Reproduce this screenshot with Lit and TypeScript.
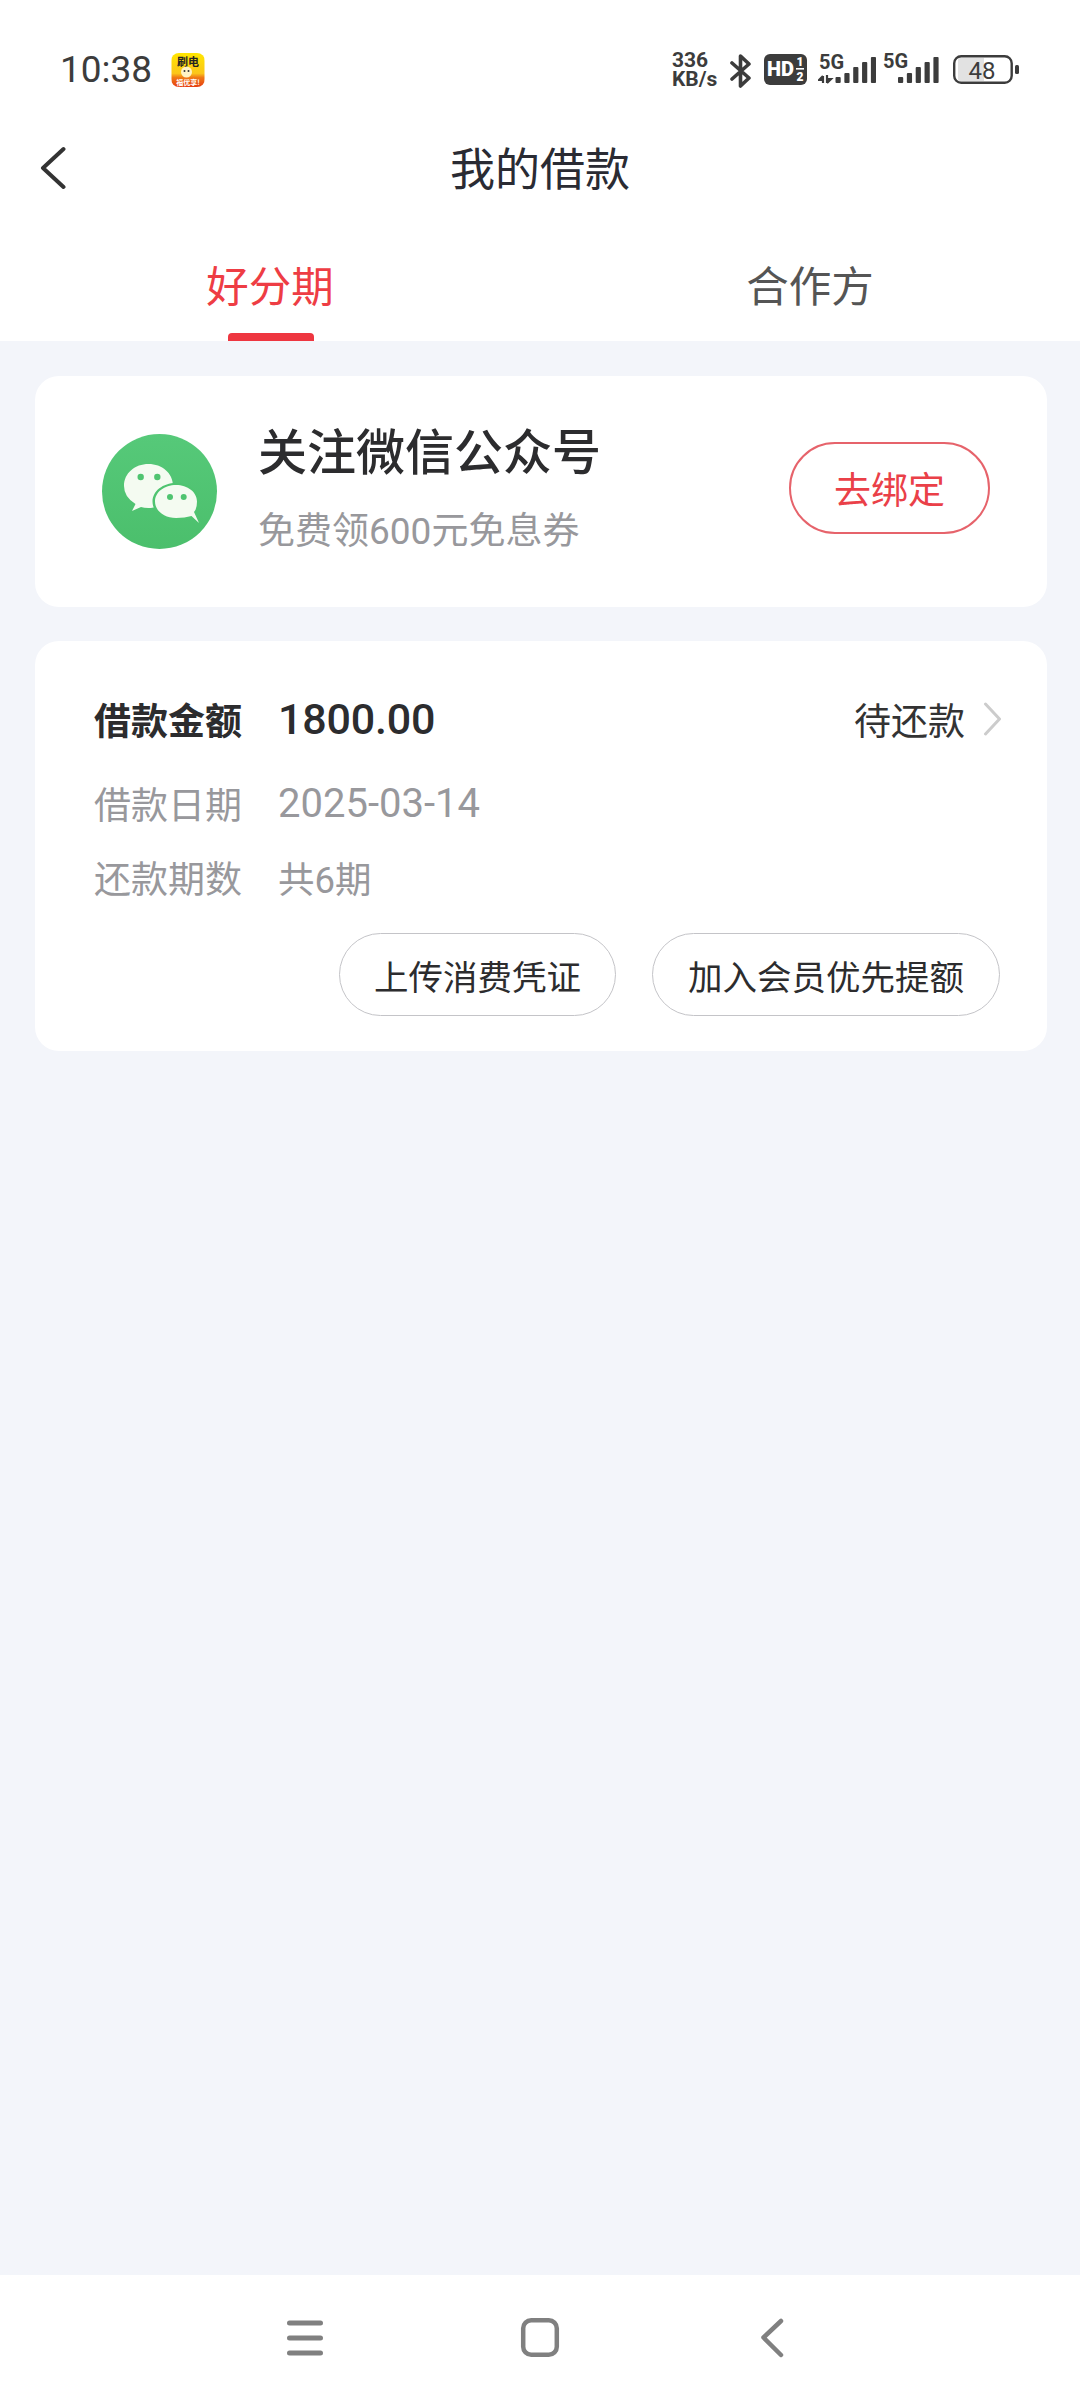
import { LitElement, html, css, svg } from "lit";
import { customElement } from "lit/decorators.js";

@customElement("app-root")
export class AppRoot extends LitElement {
  static styles = css`
    :host { display: flex; flex-direction: column; width: 1080px; height: 2400px; background: #fff; font-family: Roboto, "Noto Sans CJK SC", sans-serif; color: #2b2c30; }
    * { box-sizing: border-box; }
    svg { display: block; flex: none; }
    .status { height: 111px; padding: 53px 61px 0 60px; display: flex; justify-content: space-between; align-items: flex-start; }
    .left { display: flex; align-items: center; height: 34px; gap: 20px; }
    .time { font-size: 37px; line-height: 34px; color: #3c3c3c; width: 91px; white-space: nowrap; }
    .right { display: flex; align-items: flex-start; height: 34px; color: #3c3c3c; }
    .speed { width: 47px; margin: -2px 11px 0 0; font-size: 21px; line-height: 19px; font-weight: 700; white-space: nowrap; }
    .bt { margin-right: 12px; }
    .hd { margin-right: 11px; }
    .sig { margin-top: -6px; }
    .sig1 { margin-right: 7px; }
    .sig2 { margin-right: 14px; }
    .header { height: 110px; display: flex; align-items: center; justify-content: center; position: relative; font-size: 45px; color: #2a2b33; }
    .back { position: absolute; left: 40px; top: 35px; }
    .tabs { height: 120px; display: flex; }
    .tab { flex: 1; display: flex; flex-direction: column; align-items: center; font-size: 42.5px; line-height: 60px; padding-top: 37px; color: #555; position: relative; }
    .tab.on { color: #ee3d44; }
    .tab.on::after { content: ""; position: absolute; left: 228px; width: 86px; top: 112px; height: 8px; border-radius: 4px 4px 0 0; background: #ee3640; }
    main { flex: 1; background: #f3f5fa; padding: 35px 33px 0 35px; display: flex; flex-direction: column; gap: 34px; }
    .card { background: #fff; border-radius: 24px; }
    .wx { height: 231px; padding: 0 57px 0 67px; display: flex; align-items: center; }
    .wxtext { flex: 1; margin-left: 41px; padding-bottom: 8px; }
    .wxt { font-size: 49px; line-height: 70px; font-weight: 500; color: #2c2c2e; white-space: nowrap; }
    .wxs { margin-top: 18px; font-size: 37px; line-height: 50px; color: #98989c; white-space: nowrap; }
    .bind { width: 201px; height: 92px; margin-bottom: 7px; border: 2px solid #e6636b; border-radius: 46px; color: #ea4048; font-size: 37px; display: flex; align-items: center; justify-content: center; }
    .loan { height: 410px; padding: 38px 47px 0 59px; }
    .row { display: flex; align-items: center; white-space: nowrap; }
    .r1 { height: 80px; }
    .r2 { height: 60px; margin-top: 14px; }
    .r3 { height: 60px; margin-top: 14px; }
    .lab { width: 184px; font-size: 37px; color: #98989c; }
    .val { font-size: 40px; color: #98989c; flex: 1; }
    .r1 .lab { color: #2c2c2e; font-weight: 700; }
    .r1 .val { font-size: 43px; font-weight: 500; color: #2c2c2e; letter-spacing: -0.2px; }
    .r3 .val { font-size: 36.5px; }
    .stat { font-size: 37px; color: #333; margin-right: 18px; }
    .chev { margin-right: -2px; }
    .btns { margin-top: 26px; display: flex; justify-content: flex-end; gap: 36px; }
    .pill { height: 83px; border: 1.5px solid #c4c4c8; border-radius: 42px; display: flex; align-items: center; justify-content: center; font-size: 34.5px; color: #2c2c2e; white-space: nowrap; }
    .pa { width: 277px; }
    .pb { width: 348px; }
    .nav { height: 125px; display: flex; }
    .nav svg { margin-top: 42px; }
    .nav .n1 { margin-left: 285px; }
    .nav .n2 { margin-left: 194px; }
    .nav .n3 { margin-left: 199px; }
    .app { width: 34px; height: 34px; border-radius: 8px; overflow: hidden; }
  `;

  private bars(x: number) {
    const tops = [20, 16, 10, 5, 0];
    return tops.map((t, i) => svg`<rect x=${x + i * 8.85} y=${t + 4} width="5.2" height=${26 - t} rx="1" fill="#3c3c3c"></rect>`);
  }

  render() {
    return html`
      <div class="status">
        <div class="left">
          <span class="time">10:38</span>
          <svg class="app" width="34" height="34" viewBox="0 0 33 34">
            <defs>
              <linearGradient id="ag" x1="0" y1="0" x2="0" y2="1">
                <stop offset="0" stop-color="#ffe600"></stop>
                <stop offset=".6" stop-color="#fbc61a"></stop>
                <stop offset=".72" stop-color="#f07a16"></stop>
                <stop offset="1" stop-color="#e53d12"></stop>
              </linearGradient>
            </defs>
            <rect width="33" height="34" fill="url(#ag)"></rect>
            <text x="16.5" y="13" text-anchor="middle" font-size="11" font-weight="700" fill="#222" font-family="Noto Sans CJK SC">刷电</text>
            <circle cx="15" cy="19" r="5.5" fill="#fff3c4"></circle>
            <circle cx="13" cy="18" r="1" fill="#333"></circle>
            <circle cx="17" cy="18" r="1" fill="#333"></circle>
            <text x="16.5" y="32" text-anchor="middle" font-size="7" font-weight="700" fill="#fff" font-family="Noto Sans CJK SC">福优享!</text>
          </svg>
        </div>
        <div class="right">
          <div class="speed"><div>336</div><div>KB/s</div></div>
          <svg class="bt" width="22" height="36" viewBox="0 0 22 36" fill="none" stroke="#3c3c3c" stroke-width="3.6" stroke-linejoin="round" stroke-linecap="round">
            <path d="M2 10 L19 25 L10.5 33 V3 L19 11 L2 26"></path>
          </svg>
          <svg class="hd" width="43" height="32" viewBox="0 0 43 32">
            <rect width="43" height="31" y="1" rx="6" fill="#3c3c3c"></rect>
            <text x="3" y="23" font-size="20" font-weight="900" fill="#fff" font-family="Roboto">HD</text>
            <text x="36" y="13" text-anchor="middle" font-size="12" font-weight="900" fill="#fff" font-family="Roboto">1</text>
            <text x="36" y="28" text-anchor="middle" font-size="12" font-weight="900" fill="#fff" font-family="Roboto">2</text>
            <rect x="32" y="15" width="8" height="1.6" fill="#fff"></rect>
          </svg>
          <svg class="sig sig1" width="58" height="40" viewBox="0 -6 58 40">
            <text x="1" y="16" font-size="20" font-weight="700" fill="#3c3c3c" font-family="Roboto">5G</text>
            <path d="M5 23 L5 30 M5 23 L1 27 H5 M9 22 V30 M9 30 L13 26 H9" stroke="#3c3c3c" stroke-width="2.2" fill="none"></path>
            ${this.bars(17.5)}
          </svg>
          <svg class="sig sig2" width="56" height="40" viewBox="0 -6 56 40">
            <text x="0" y="15" font-size="20" font-weight="700" fill="#3c3c3c" font-family="Roboto">5G</text>
            ${this.bars(15)}
          </svg>
          <svg width="66" height="32" viewBox="0 0 66 32">
            <path d="M7 5 H31 V28 H7 Q5 28 5 26 V7 Q5 5 7 5Z" fill="#e2e2e2"></path>
            <rect x="1.2" y="3.2" width="57.5" height="26.6" rx="7" fill="none" stroke="#3c3c3c" stroke-width="2.4"></rect>
            <rect x="62" y="12" width="4" height="9" rx="1.5" fill="#3c3c3c"></rect>
            <text x="29" y="26" text-anchor="middle" font-size="24" fill="#3c3c3c" font-family="Roboto">48</text>
          </svg>
        </div>
      </div>

      <div class="header">
        <svg class="back" width="26" height="44" viewBox="0 0 26 44" fill="none" stroke="#333" stroke-width="4" stroke-linecap="round" stroke-linejoin="round">
          <path d="M23.5 3 L3 22 L23.5 41"></path>
        </svg>
        我的借款
      </div>

      <div class="tabs">
        <div class="tab on">好分期</div>
        <div class="tab">合作方</div>
      </div>

      <main>
        <section class="card wx">
          <svg width="115" height="115" viewBox="0 0 115 115">
            <defs>
              <linearGradient id="wg" x1="0" y1="0" x2="0" y2="1">
                <stop offset="0" stop-color="#56c979"></stop>
                <stop offset="1" stop-color="#4bbf6c"></stop>
              </linearGradient>
            </defs>
            <circle cx="57.5" cy="57.5" r="57.5" fill="url(#wg)"></circle>
            <path d="M30 77 L33.5 70 Q22 63 22 52 C22 39 33 30 46.5 30 C60 30 71 39 71 52 C71 65 60 74 46.5 74 Q42 74 39 73 Z" fill="#f4fbf1"></path>
            <path d="M100 91 L90 84 Q84 86 74 86 C61 86 50.5 78 50.5 67.5 C50.5 57 61 49 74 49 C87 49 97.5 57 97.5 67.5 Q97.5 75 94 79 Z" fill="#4fc470"></path>
            <path d="M97 89 L89.5 82 Q83 84 74 84 C62.5 84 53 77 53 67.5 C53 58 62.5 51 74 51 C85.5 51 95 58 95 67.5 Q95 75 92 78 Z" fill="#f4fbf1"></path>
            <circle cx="38.7" cy="43" r="3.2" fill="#4fc470"></circle>
            <circle cx="55.3" cy="43" r="3.2" fill="#4fc470"></circle>
            <circle cx="68" cy="63" r="3" fill="#4fc470"></circle>
            <circle cx="81.7" cy="63" r="3" fill="#4fc470"></circle>
          </svg>
          <div class="wxtext">
            <div class="wxt">关注微信公众号</div>
            <div class="wxs">免费领600元免息券</div>
          </div>
          <div class="bind">去绑定</div>
        </section>

        <section class="card loan">
          <div class="row r1">
            <span class="lab">借款金额</span>
            <span class="val">1800.00</span>
            <span class="stat">待还款</span>
            <svg class="chev" width="19" height="34" viewBox="0 0 19 34" fill="none" stroke="#cccccc" stroke-width="3" stroke-linecap="round" stroke-linejoin="round">
              <path d="M2.5 2 L16.5 17 L2.5 32"></path>
            </svg>
          </div>
          <div class="row r2">
            <span class="lab">借款日期</span>
            <span class="val">2025-03-14</span>
          </div>
          <div class="row r3">
            <span class="lab">还款期数</span>
            <span class="val">共6期</span>
          </div>
          <div class="btns">
            <div class="pill pa">上传消费凭证</div>
            <div class="pill pb">加入会员优先提额</div>
          </div>
        </section>
      </main>

      <nav class="nav">
        <svg class="n1" width="40" height="40" viewBox="0 0 40 40" fill="none" stroke="#808080" stroke-width="5" stroke-linecap="round">
          <path d="M4.5 6 H35.5 M4.5 21 H35.5 M4.5 36 H35.5"></path>
        </svg>
        <svg class="n2" width="42" height="44" viewBox="0 0 42 44" fill="none" stroke="#808080" stroke-width="4.5">
          <rect x="4.2" y="3.2" width="33.6" height="34.6" rx="8"></rect>
        </svg>
        <svg class="n3" width="28" height="44" viewBox="0 0 28 44" fill="none" stroke="#808080" stroke-width="4.5" stroke-linecap="round" stroke-linejoin="round">
          <path d="M21 4 L3.5 20.5 L21 38"></path>
        </svg>
      </nav>
    `;
  }
}
